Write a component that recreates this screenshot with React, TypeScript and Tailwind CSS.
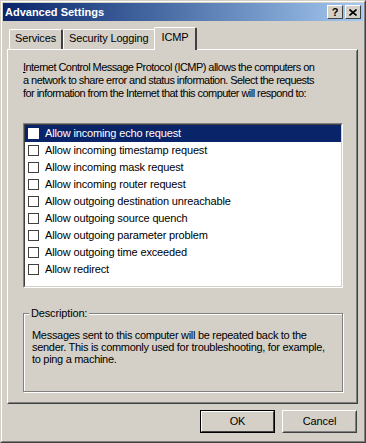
import React, { useState } from 'react';

const ITEMS = [
  'Allow incoming echo request',
  'Allow incoming timestamp request',
  'Allow incoming mask request',
  'Allow incoming router request',
  'Allow outgoing destination unreachable',
  'Allow outgoing source quench',
  'Allow outgoing parameter problem',
  'Allow outgoing time exceeded',
  'Allow redirect',
];

const TABS = ['Services', 'Security Logging', 'ICMP'];

function CaptionButton({ children }: { children: React.ReactNode }) {
  return (
    <div className="w-[16px] h-[14px] bg-[#d4d0c8] border border-t-white border-l-white border-r-[#404040] border-b-[#404040] flex items-center justify-center text-black">
      {children}
    </div>
  );
}

function Tab({ label, active }: { label: string; active: boolean }) {
  if (active) {
    return (
      <div className="relative z-10 -mx-[2px] -mb-px h-[23px] px-[7px] pt-[3px] bg-[#d4d0c8] border-t border-l border-r-2 border-t-white border-l-white border-r-[#404040] rounded-t-[2px]">
        {label}
      </div>
    );
  }
  return (
    <div className="h-[20px] px-[5px] pt-[2px] border-t border-l border-r-2 border-t-white border-l-white border-r-[#404040] rounded-t-[2px]">
      {label}
    </div>
  );
}

export default function App() {
  const [selected, setSelected] = useState(0);
  const [checked, setChecked] = useState<boolean[]>(ITEMS.map(() => false));
  const [tab] = useState(2);

  return (
    <div
      className="w-[366px] h-[443px] bg-[#d4d0c8] border border-t-[#d4d0c8] border-l-[#d4d0c8] border-r-[#404040] border-b-[#404040] text-[11px] leading-[13px] text-black select-none tracking-[-0.15px]"
      style={{ fontFamily: '"Liberation Sans", Arial, sans-serif' }}
    >
      <div className="h-full border border-t-white border-l-white border-r-[#808080] border-b-[#808080] p-px flex flex-col">
        {/* title bar */}
        <div className="h-[18px] shrink-0 flex items-center pl-[2px] pr-[2px] bg-gradient-to-r from-[#0a246a] to-[#a6caf0]">
          <span className="flex-1 font-bold text-white text-[11px] tracking-normal">Advanced Settings</span>
          <div className="flex gap-[2px]">
            <CaptionButton>
              <span className="font-bold text-[11px] leading-none">?</span>
            </CaptionButton>
            <CaptionButton>
              <svg width="8" height="7" viewBox="0 0 8 7">
                <path d="M0.5 0.5 L7.5 6.5 M7.5 0.5 L0.5 6.5" stroke="black" strokeWidth="1.6" />
              </svg>
            </CaptionButton>
          </div>
        </div>

        {/* tabs */}
        <div className="mt-[6px] ml-[4px] mr-[5px] flex flex-col flex-1">
          <div className="h-[22px] flex items-end pl-[2px]">
            {TABS.map((t, i) => (
              <Tab key={t} label={t} active={i === tab} />
            ))}
          </div>
          <div className="h-[355px] border border-t-white border-l-white border-r-[#404040] border-b-[#404040]">
            <div className="h-full border border-t-[#d4d0c8] border-l-[#d4d0c8] border-r-[#808080] border-b-[#808080] pl-[14px] pr-[12px] pt-[10px] flex flex-col">
              <p className="whitespace-nowrap tracking-[-0.55px]">
                <u>I</u>nternet Control Message Protocol (ICMP) allows the computers on
                <br />
                a network to share error and status information. Select the requests
                <br />
                for information from the Internet that this computer will respond to:
              </p>

              <div className="mt-[23px] w-[320px] h-[165px] border border-t-[#808080] border-l-[#808080] border-r-white border-b-white">
                <div className="h-full border border-t-[#404040] border-l-[#404040] border-r-[#d4d0c8] border-b-[#d4d0c8] bg-white">
                  {ITEMS.map((item, i) => (
                    <div
                      key={item}
                      className={`h-[17px] flex items-center pl-[3px] ${i === selected ? 'bg-[#0a246a] text-white' : ''}`}
                      onClick={() => setSelected(i)}
                    >
                      <div
                        className={`w-[11px] h-[11px] border ${i === selected ? 'border-white bg-white' : 'border-[#404040] bg-white'} flex items-center justify-center`}
                        onClick={() => setChecked(prev => prev.map((c, j) => (j === i ? !c : c)))}
                      >
                        {checked[i] && (
                          <svg width="7" height="7" viewBox="0 0 7 7">
                            <path d="M0.5 3.5 L2.5 5.5 L6.5 1" stroke="black" strokeWidth="1.5" fill="none" />
                          </svg>
                        )}
                      </div>
                      <span className="ml-[6px]">{item}</span>
                    </div>
                  ))}
                </div>
              </div>

              <fieldset className="mt-[19px] w-[320px] h-[85px] border border-[#808080] shadow-[inset_1px_1px_0_#ffffff,1px_1px_0_#ffffff] pl-[8px] pt-[9px]">
                <legend className="-ml-[3px] px-[2px] bg-[#d4d0c8]">Description:</legend>
                <div className="whitespace-nowrap tracking-[-0.3px] leading-[12px]">
                  Messages sent to this computer will be repeated back to the
                  <br />
                  sender. This is commonly used for troubleshooting, for example,
                  <br />
                  to ping a machine.
                </div>
              </fieldset>
            </div>
          </div>

          {/* buttons */}
          <div className="mt-[6px] flex justify-end gap-[7px] pr-[1px]">
            <button className="w-[75px] h-[23px] border border-black bg-[#d4d0c8]">
              <div className="h-full border border-t-white border-l-white border-r-[#404040] border-b-[#404040] flex items-center justify-center">
                OK
              </div>
            </button>
            <button className="w-[75px] h-[23px] border border-t-white border-l-white border-r-[#404040] border-b-[#404040] bg-[#d4d0c8]">
              <div className="h-full border border-t-[#d4d0c8] border-l-[#d4d0c8] border-r-[#808080] border-b-[#808080] flex items-center justify-center">
                Cancel
              </div>
            </button>
          </div>
        </div>
      </div>
    </div>
  );
}
